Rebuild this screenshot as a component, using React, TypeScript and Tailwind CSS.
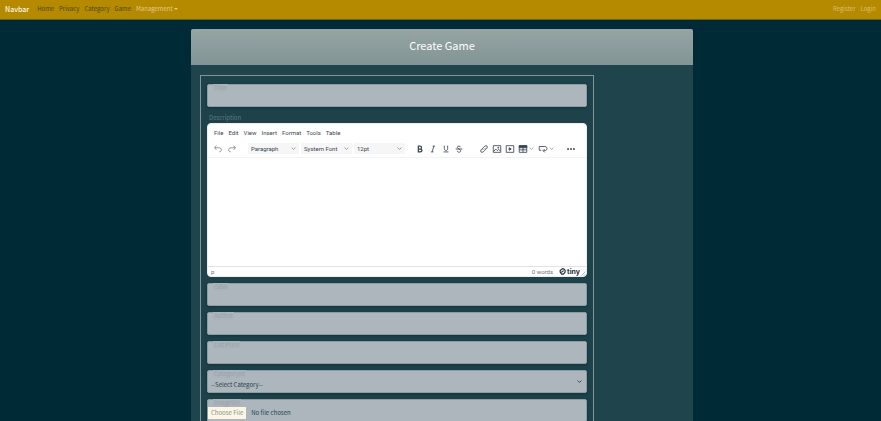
import React from "react";

const chevron = (
  <svg viewBox="0 0 8 8" className="h-[5px] w-[5px]" fill="none" stroke="currentColor" strokeWidth="1.2" aria-hidden="true">
    <path d="M1 2.5 4 5.5 7 2.5" />
  </svg>
);

function Icon({ children }: { children: React.ReactNode }) {
  return (
    <svg viewBox="0 0 24 24" className="h-[10px] w-[10px] shrink-0" fill="none" stroke="currentColor" strokeWidth="2" aria-hidden="true">
      {children}
    </svg>
  );
}

function Tool({ label, children, arrow }: { label: string; children: React.ReactNode; arrow?: boolean }) {
  return (
    <button
      type="button"
      aria-label={label}
      className={
        arrow
          ? "flex h-[11px] w-[20px] items-center gap-[1px] pl-[2px]"
          : "flex h-[11px] w-[13px] items-center justify-center"
      }
    >
      {children}
      {arrow && <span className="text-[#8d949e]">{chevron}</span>}
    </button>
  );
}

function ToolSelect({ label, value }: { label: string; value: string }) {
  return (
    <div className="relative flex h-[11px] w-[51px] items-center bg-[#f6f6f7]">
      <select aria-label={label} className="h-full w-full appearance-none bg-transparent pl-[3px] text-[6px] leading-[11px] outline-none">
        <option>{value}</option>
      </select>
      <span className="pointer-events-none absolute right-[3px] text-[#7a828c]">{chevron}</span>
    </div>
  );
}

function Editor() {
  return (
    <div className="flex h-[154px] flex-col overflow-hidden rounded-[4px] border border-[#eeeeee] bg-white font-['Roboto','Noto_Sans',sans-serif] text-[6px] text-[#3a4553]">
      <div className="flex h-[16px] items-center gap-[5px] pl-[6px]">
        {["File", "Edit", "View", "Insert", "Format", "Tools", "Table"].map((m) => (
          <button type="button" key={m} className="leading-[9px]">{m}</button>
        ))}
      </div>
      <div className="flex h-[18px] items-center border-b border-[#f3f3f3] pl-[3px] shadow-[0_1px_2px_rgba(34,47,62,0.06)]">
        <div className="flex gap-[1px] text-[#7d858f]">
          <Tool label="Undo">
            <Icon><path d="M8 4 4 9l4 5M4 9h10c4 0 6 2 6 5s-2 5-5 5" /></Icon>
          </Tool>
          <Tool label="Redo">
            <Icon><path d="m16 4 4 5-4 5M20 9H10c-4 0-6 2-6 5s2 5 5 5" /></Icon>
          </Tool>
        </div>
        <div className="ml-[10px] flex gap-[2px]">
          <ToolSelect label="Block format" value="Paragraph" />
          <ToolSelect label="Font" value="System Font" />
          <ToolSelect label="Font size" value="12pt" />
        </div>
        <div className="ml-[8px] flex">
          <Tool label="Bold">
            <Icon><path strokeWidth="3" d="M8 5h4c5 0 5 7 0 7H8zM8 12h5c5 0 5 7 0 7H8z" /></Icon>
          </Tool>
          <Tool label="Italic">
            <Icon><path d="M11 5h6M7 19h6M14 5l-4 14" /></Icon>
          </Tool>
          <Tool label="Underline">
            <Icon><path d="M8 4v7c0 6 8 6 8 0V4M6 19h12" /></Icon>
          </Tool>
          <Tool label="Strikethrough">
            <Icon><path d="M16 8c-1-4-8-4-8 0 0 4 8 4 8 8 0 5-8 5-8 0M4 12h16" /></Icon>
          </Tool>
        </div>
        <div className="ml-[12px] flex">
          <Tool label="Link">
            <Icon><path d="M10 14c-2-2-1-4 0-5l4-4c4-3 8 1 5 5l-3 3M14 10c2 2 1 4 0 5l-4 4c-4 3-8-1-5-5l3-3" /></Icon>
          </Tool>
          <Tool label="Image">
            <Icon><path d="M3 4h18v16H3zM4 18l5-6 4 4 3-3 4 4M14 8h2v2h-2z" /></Icon>
          </Tool>
          <Tool label="Media">
            <Icon><path d="M3 4h18v16H3z" /><path fill="currentColor" d="m10 9 5 3-5 3z" /></Icon>
          </Tool>
          <Tool label="Table" arrow>
            <Icon><path d="M3 4h18v16H3zM3 14h18M12 8v12" /><path fill="currentColor" d="M3 4h18v5H3z" /></Icon>
          </Tool>
          <Tool label="Line height" arrow>
            <Icon><path d="M3 6h14c6 0 6 10 0 10h-4M16 12l-4 4 4 4M3 6v9h5" /></Icon>
          </Tool>
        </div>
        <div className="ml-[8px] flex">
          <Tool label="More">
            <Icon><g fill="currentColor"><circle cx="5" cy="12" r="1.5" /><circle cx="12" cy="12" r="1.5" /><circle cx="19" cy="12" r="1.5" /></g></Icon>
          </Tool>
        </div>
      </div>
      <textarea id="description" className="w-full flex-1 resize-none bg-white p-[6px] outline-none" />
      <div className="flex h-[10px] items-center border-t border-[#e3e3e3] pl-[3px] text-[#6b7480]">
        <span className="leading-[9px]">p</span>
        <span className="ml-auto leading-[9px]">0 words</span>
        <span className="ml-[6px] flex items-center gap-[1px] text-[#222f3e]">
          <svg viewBox="0 0 24 24" className="h-[7px] w-[7px]" fill="none" stroke="currentColor" strokeWidth="4" aria-hidden="true">
            <path d="M4 14V9l7-6h5l5 5v6l-6 7H9zM8 15l8-6" />
          </svg>
          <span className="font-['Inter',sans-serif] text-[7px] font-bold leading-[9px]">tiny</span>
        </span>
        <svg viewBox="0 0 8 8" className="ml-[1px] mt-[3px] h-[5px] w-[5px]" fill="none" stroke="currentColor" strokeWidth="0.8" aria-hidden="true">
          <path d="M1 7 7 1M5 7l2-2" />
        </svg>
      </div>
    </div>
  );
}

const control =
  "block h-[23px] w-full rounded-[2px] border border-[#8c9ca2] bg-[#adb5bd] text-[6px] text-[#1c4650] shadow-[0_1px_3px_rgba(0,30,38,0.4)] outline-none";

function Field({ id, label, children }: { id: string; label: string; children: React.ReactNode }) {
  return (
    <div className="relative">
      {children}
      <label htmlFor={id} className="absolute left-[6px] top-0 bg-[#abb3bb] px-[1px] text-[6px] leading-[8px] text-[#97a4a9]">
        {label}
      </label>
    </div>
  );
}

export default function App() {
  return (
    <div className="h-screen overflow-hidden bg-[#002b36] font-['Noto_Sans_CJK_SC','Noto_Sans',sans-serif] text-[6px]">
      <nav className="flex h-[20px] items-center border-b border-[#5f6420] bg-[#b58900] px-[5px] pb-[2px] leading-[10px]">
        <a href="#" className="text-[7px] font-medium text-[#fdf6e3]">Navbar</a>
        <div className="ml-[8px] flex gap-[5px] text-[#4c4a17]">
          <a href="#">Home</a>
          <a href="#">Privacy</a>
          <a href="#">Category</a>
          <a href="#">Game</a>
          <button type="button" className="flex items-center gap-[1px] text-[#e2cb85]">
            Management
            <span className="border-x-2 border-t-2 border-x-transparent border-t-current" />
          </button>
        </div>
        <div className="ml-auto flex gap-[5px] text-[#dbbf6c]">
          <a href="#">Register</a>
          <a href="#">Login</a>
        </div>
      </nav>

      <main className="pl-[3px] pt-[9px]">
        <div className="mx-auto max-w-[502px] overflow-hidden rounded-t-[2px] bg-[#1f444c]">
          <header className="flex h-[36px] items-center justify-center bg-linear-to-b from-[#96a5a4] to-[#829495] pb-[5px]">
            <h1 className="text-[11px] leading-[16px] text-[#fdfdfb]">Create Game</h1>
          </header>
          <div className="p-[9px] pt-[10px]">
            <form className="mr-[90px] flex flex-col gap-[6px] border border-[#839599] bg-[#1d424a] px-[6px] pt-[8px] pb-[9px]">
              <Field id="title" label="Title">
                <input id="title" className={control} />
              </Field>
              <div>
                <label htmlFor="description" className="block h-[10px] pl-[2px] leading-[10px] text-[#5f7a80]">Description</label>
                <Editor />
              </div>
              <Field id="isbn" label="ISBN"><input id="isbn" className={control} /></Field>
              <Field id="author" label="Author"><input id="author" className={control} /></Field>
              <Field id="price" label="List Price"><input id="price" className={control} /></Field>
              <Field id="category" label="CategoryId">
                <select id="category" className={`${control} appearance-none pl-[3px] pt-[6px]`}>
                  <option>--Select Category--</option>
                </select>
                <svg viewBox="0 0 8 8" className="pointer-events-none absolute right-[5px] top-[9px] h-[5px] w-[5px] text-[#14505c]" fill="none" stroke="currentColor" strokeWidth="1.5" aria-hidden="true">
                  <path d="M1 2.5 4 5.5 7 2.5" />
                </svg>
              </Field>
              <Field id="image" label="ImageUrl">
                <input
                  id="image"
                  type="file"
                  className={`${control} pt-[7px] leading-[12px] file:mr-[5px] file:h-[12px] file:bg-[#fdf6e3] file:px-[3px] file:leading-[12px] file:text-[#839496]`}
                />
              </Field>
            </form>
          </div>
        </div>
      </main>
    </div>
  );
}
